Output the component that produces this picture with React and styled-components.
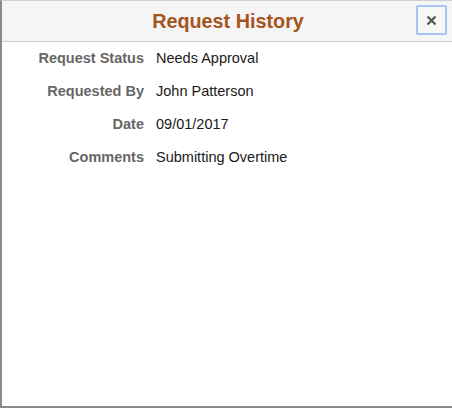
import { Fragment } from "react";
import styled, { createGlobalStyle } from "styled-components";

const GlobalStyle = createGlobalStyle`
  html, body {
    margin: 0;
    padding: 0;
    background: #ffffff;
  }
  body {
    font-family: "Liberation Sans", Arial, sans-serif;
  }
`;

const Dialog = styled.div`
  box-sizing: border-box;
  width: 452px;
  height: 408px;
  display: flex;
  flex-direction: column;
  background: #ffffff;
  border-left: 2px solid #8a8a8a;
  border-bottom: 2px solid #8a8a8a;
  border-top: 1px solid #d0d0d0;
`;

const Header = styled.div`
  position: relative;
  height: 40px;
  display: flex;
  align-items: center;
  justify-content: center;
  background: #f5f5f5;
  border-bottom: 1px solid #cfcfcf;
`;

const Title = styled.h1`
  margin: 0;
  font-size: 19.8px;
  font-weight: bold;
  color: #a5541c;
  padding-left: 2px;
`;

const CloseButton = styled.button`
  position: absolute;
  right: 5px;
  top: 4px;
  box-sizing: border-box;
  width: 31px;
  height: 30px;
  padding: 0;
  display: flex;
  align-items: center;
  justify-content: center;
  background: #f7f7f7;
  border: 2px solid #a9c3f2;
  border-radius: 2px;
  cursor: pointer;
`;

const Details = styled.div`
  display: grid;
  grid-template-columns: 142px auto;
  column-gap: 12px;
  row-gap: 17px;
  padding-top: 8px;
  font-size: 14.5px;
  line-height: 16px;
`;

const Label = styled.div`
  text-align: right;
  font-weight: bold;
  color: #666666;
`;

const Value = styled.div`
  color: #1a1a1a;
`;

const rows = [
  ["Request Status", "Needs Approval"],
  ["Requested By", "John Patterson"],
  ["Date", "09/01/2017"],
  ["Comments", "Submitting Overtime"],
];

export default function App() {
  return (
    <>
      <GlobalStyle />
      <Dialog>
        <Header>
          <Title>Request History</Title>
          <CloseButton aria-label="Close">
            <svg width="11" height="11" viewBox="0 0 11 11">
              <path d="M1.5 1.5 L9.5 9.5 M9.5 1.5 L1.5 9.5" stroke="#555" strokeWidth="2.2" />
            </svg>
          </CloseButton>
        </Header>
        <Details>
          {rows.map(([label, value]) => (
            <Fragment key={label}>
              <Label>{label}</Label>
              <Value>{value}</Value>
            </Fragment>
          ))}
        </Details>
      </Dialog>
    </>
  );
}
